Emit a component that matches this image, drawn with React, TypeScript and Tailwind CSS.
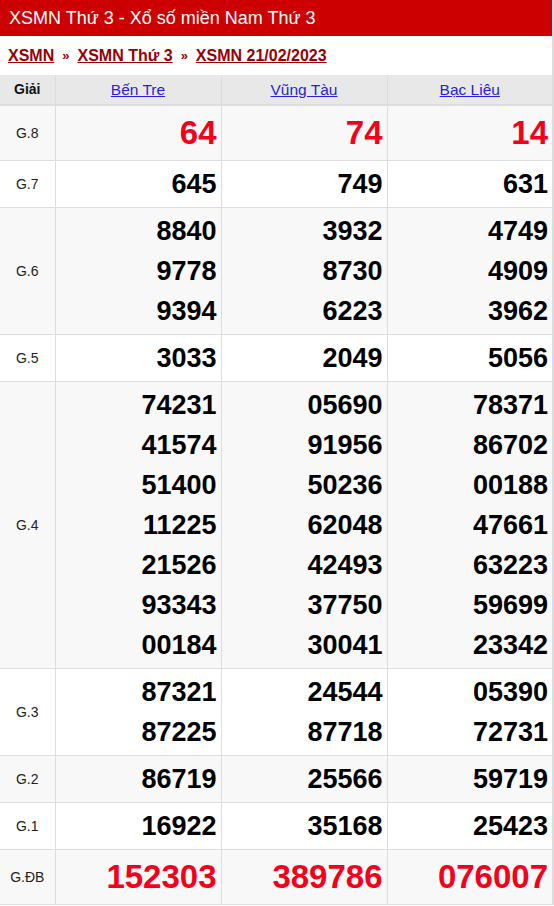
import React from 'react';

type Row = {
  label: string;
  values: string[][];
  big?: boolean;
  alt?: boolean;
};

const rows: Row[] = [
  { label: 'G.8', values: [['64'], ['74'], ['14']], big: true, alt: true },
  { label: 'G.7', values: [['645'], ['749'], ['631']] },
  {
    label: 'G.6',
    values: [
      ['8840', '9778', '9394'],
      ['3932', '8730', '6223'],
      ['4749', '4909', '3962'],
    ],
    alt: true,
  },
  { label: 'G.5', values: [['3033'], ['2049'], ['5056']] },
  {
    label: 'G.4',
    values: [
      ['74231', '41574', '51400', '11225', '21526', '93343', '00184'],
      ['05690', '91956', '50236', '62048', '42493', '37750', '30041'],
      ['78371', '86702', '00188', '47661', '63223', '59699', '23342'],
    ],
    alt: true,
  },
  {
    label: 'G.3',
    values: [
      ['87321', '87225'],
      ['24544', '87718'],
      ['05390', '72731'],
    ],
  },
  { label: 'G.2', values: [['86719'], ['25566'], ['59719']], alt: true },
  { label: 'G.1', values: [['16922'], ['35168'], ['25423']] },
  { label: 'G.ĐB', values: [['152303'], ['389786'], ['076007']], big: true, alt: true },
];

const provinces = ['Bến Tre', 'Vũng Tàu', 'Bạc Liêu'];

export default function App() {
  return (
    <div className="w-[554px] border-r-2 border-[#dddddd] bg-white font-['Liberation_Sans',Arial,sans-serif] text-[#111]">
      <div className="h-9 bg-[#cc0000] pl-[9px] text-[18px] leading-9 text-white">
        XSMN Thứ 3 - Xổ số miền Nam Thứ 3
      </div>
      <div className="flex h-[39px] items-center gap-2 pl-2 text-[16px] font-bold text-[#990000]">
        <a href="#" className="underline">XSMN</a>
        <span className="text-[13px]">»</span>
        <a href="#" className="underline">XSMN Thứ 3</a>
        <span className="text-[13px]">»</span>
        <a href="#" className="underline">XSMN 21/02/2023</a>
      </div>
      <table className="w-[552px] table-fixed border-collapse">
        <colgroup>
          <col className="w-[55px]" />
          <col className="w-[166px]" />
          <col className="w-[166px]" />
          <col className="w-[165px]" />
        </colgroup>
        <thead>
          <tr className="h-[30px] bg-[#e8e8e8]">
            <th className="border-b-2 border-r border-[#dddddd] text-[14px] font-bold">Giải</th>
            {provinces.map((p, i) => (
              <th
                key={p}
                className={`border-b-2 border-[#dddddd] text-[15.5px] font-normal ${i < 2 ? 'border-r' : ''}`}
              >
                <a href="#" className="text-[#2a1fd6] underline">
                  {p}
                </a>
              </th>
            ))}
          </tr>
        </thead>
        <tbody>
          {rows.map((row) => (
            <tr
              key={row.label}
              className={`border-b border-[#dddddd] ${row.alt ? 'bg-[#f8f8f8]' : 'bg-white'}`}
            >
              <td className="border-r border-[#dddddd] text-center text-[14px] text-[#222]">
                {row.label}
              </td>
              {row.values.map((vals, i) => (
                <td
                  key={i}
                  className={`py-[3px] pr-1 text-right align-middle font-bold ${i < 2 ? 'border-r border-[#dddddd]' : ''} ${
                    row.big ? 'text-[33px] leading-[48px] text-[#f5001b]' : 'text-[27px] leading-10 text-black'
                  }`}
                >
                  {vals.map((v, j) => (
                    <div key={j}>{v}</div>
                  ))}
                </td>
              ))}
            </tr>
          ))}
        </tbody>
      </table>
    </div>
  );
}
